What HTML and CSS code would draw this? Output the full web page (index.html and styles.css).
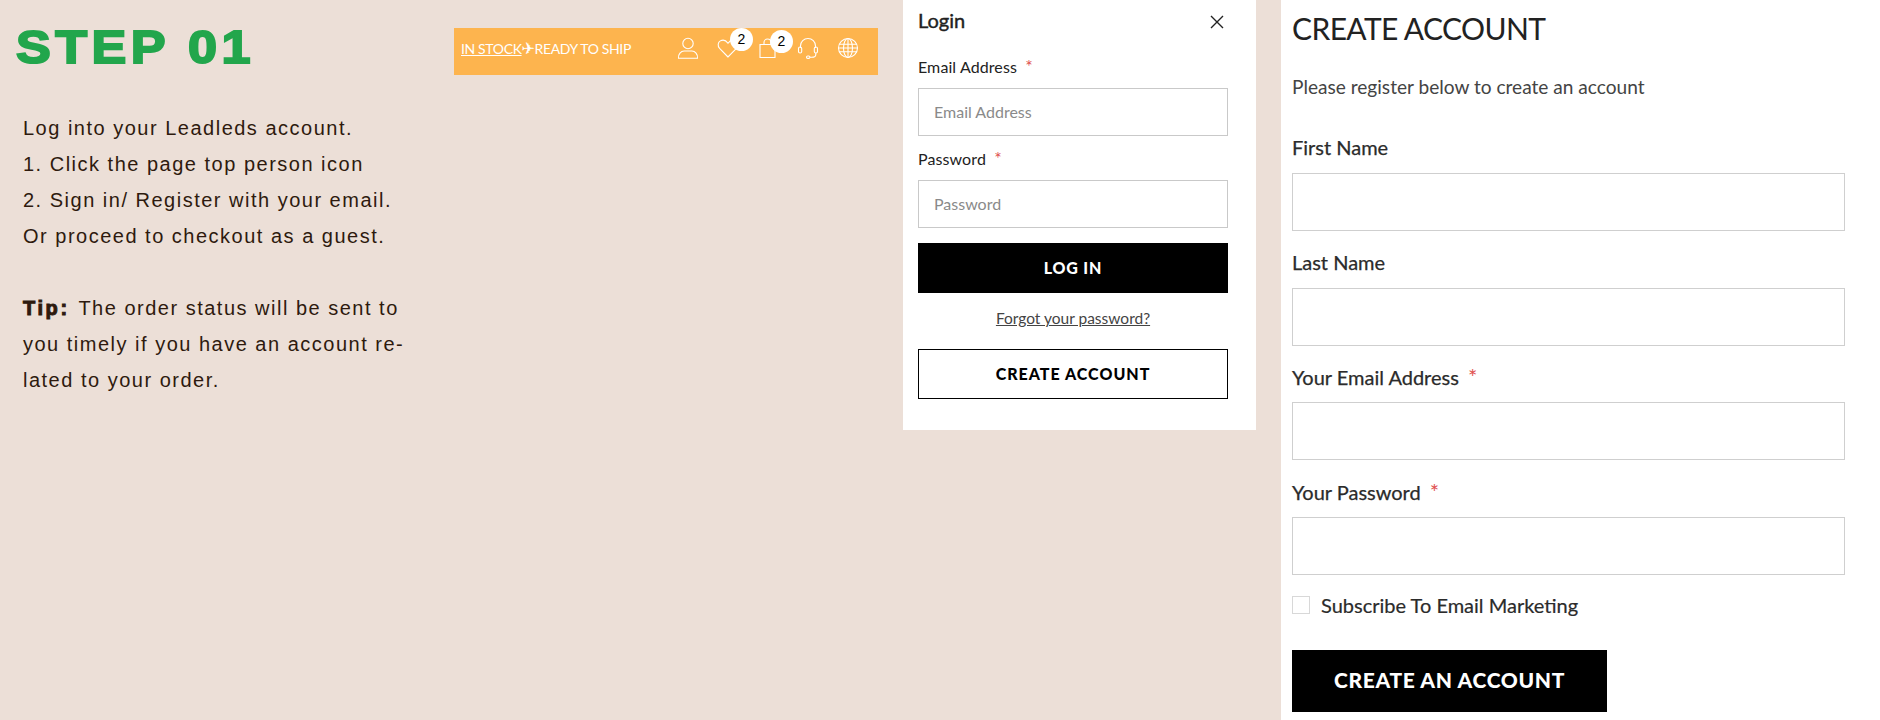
FILE: index.html
```html
<!DOCTYPE html>
<html lang="en">
<head>
<meta charset="UTF-8">
<meta name="viewport" content="width=device-width, initial-scale=1.0">
<title>Step 01</title>
<link rel="stylesheet" href="styles.css">
</head>
<body>
  <div class="page">

    <section class="intro">
      <h1 class="step-title">STEP 01</h1>
      <div class="intro-text">
        <p>Log into your Leadleds account.<br>
        1. Click the page top person icon<br>
        2. Sign in/ Register with your email.<br>
        Or proceed to checkout as a guest.</p>
        <p><b class="tip">Tip:</b> The order status will be sent to<br>
        you timely if you have an account re-<br>
        lated to your order.</p>
      </div>
    </section>

    <section class="topbar-col">
      <div class="topbar">
        <div class="promo"><a href="#">IN STOCK</a><span class="plane">✈</span>READY TO SHIP</div>
        <div class="topbar-icons">
          <!-- person -->
          <svg class="icon" viewBox="0 0 22 22" width="22" height="22">
            <circle cx="11" cy="6.5" r="5.2"/>
            <path d="M1.5 21.3c-.6-4.2 2.6-7.3 5.6-7.3h7.8c3 0 6.2 3.100 5.600 7.300z"/>
          </svg>
          <span class="icon-wrap">
            <svg class="icon" viewBox="0 0 22 22" width="22" height="22">
              <path d="M11 20 2.600 11.400C.4 9 .8 5.400 3.300 3.900c2.600-1.500 5.600-.6 7.700 2.300 2.100-2.900 5.100-3.800 7.700-2.300 2.500 1.500 2.900 5.100.7 7.500z"/>
            </svg>
            <span class="badge badge-heart">2</span>
          </span>
          <span class="icon-wrap">
            <svg class="icon" viewBox="0 0 22 22" width="22" height="22">
              <path d="M3 7.500h15v13H3z"/>
              <path d="M7 7.500V5.500a3.500 3.500 0 0 1 7 0v2"/>
            </svg>
            <span class="badge badge-bag">2</span>
          </span>
          <!-- headset -->
          <svg class="icon" viewBox="0 0 22 22" width="22" height="22">
            <path d="M3.500 11V9a7.500 7.500 0 0 1 15 0v2"/>
            <rect x="1.500" y="10" width="3.200" height="6" rx="1.600"/>
            <rect x="17.300" y="10" width="3.200" height="6" rx="1.600"/>
            <path d="M18.800 16v1.500c0 1.800-2 2.800-4 2.800h-2"/>
            <rect x="9.500" y="19" width="3.400" height="2.400" rx="1.200"/>
          </svg>
          <!-- globe -->
          <svg class="icon" viewBox="0 0 22 22" width="22" height="22">
            <circle cx="11" cy="11" r="9.500"/>
            <ellipse cx="11" cy="11" rx="4.500" ry="9.500"/>
            <path d="M11 1.500v19M2.300 7.300h17.400M1.500 11h19M2.300 14.700h17.400"/>
          </svg>
        </div>
      </div>
    </section>

    <section class="login-col">
      <div class="login-head">
        <h2 class="login-title">Login</h2>
        <svg class="close" viewBox="0 0 14 14" width="14" height="14">
          <path d="M1 1l12 12M13 1 1 13"/>
        </svg>
      </div>
      <label class="login-label">Email Address <span class="req">*</span></label>
      <input class="login-input" type="text" placeholder="Email Address">
      <label class="login-label">Password <span class="req">*</span></label>
      <input class="login-input" type="text" placeholder="Password">
      <button class="btn-login">LOG IN</button>
      <a class="forgot" href="#">Forgot your password?</a>
      <button class="btn-outline">CREATE ACCOUNT</button>
    </section>

    <section class="register-col">
      <h2 class="register-title">CREATE ACCOUNT</h2>
      <p class="register-sub">Please register below to create an account</p>
      <label class="reg-label">First Name</label>
      <input class="reg-input" type="text">
      <label class="reg-label">Last Name</label>
      <input class="reg-input" type="text">
      <label class="reg-label">Your Email Address <span class="req">*</span></label>
      <input class="reg-input" type="text">
      <label class="reg-label">Your Password <span class="req">*</span></label>
      <input class="reg-input" type="text">
      <div class="subscribe">
        <span class="checkbox"></span>
        <span>Subscribe To Email Marketing</span>
      </div>
      <button class="btn-register">CREATE AN ACCOUNT</button>
    </section>

  </div>
</body>
</html>
```

FILE: styles.css
```css
* {
  box-sizing: border-box;
}
body {
  margin: 0;
  height: 720px;
  overflow: hidden;
  background-color: #ecdfd7;
  font-family: "Lato", "Liberation Sans", sans-serif;
}
.page {
  display: flex;
  height: 720px;
}
.req {
  color: #e05050;
  margin-left: 4px;
  font-size: 1.1em;
  -webkit-text-stroke: 0;
}

/* left text */
.intro {
  width: 454px;
  flex: none;
  padding: 22px 0 0 16px;
}
.step-title {
  margin: 0;
  font-family: "Liberation Sans", Arial, sans-serif;
  font-size: 47px;
  line-height: 50px;
  font-weight: bold;
  letter-spacing: 4px;
  color: #22a64c;
  -webkit-text-stroke: 2px #22a64c;
  transform: scaleX(1.11);
  transform-origin: left center;
}
.intro-text {
  padding: 38px 0 0 7px;
  font-family: "Liberation Sans", Arial, sans-serif;
  font-size: 20px;
  line-height: 36px;
  letter-spacing: 1.5px;
  color: #2e1a0e;
}
.intro-text p {
  margin: 0 0 36px;
}
.tip {
  letter-spacing: 2.6px;
  margin-right: 2px;
  -webkit-text-stroke: 1px #2e1a0e;
}

/* orange bar */
.topbar-col {
  width: 449px;
  flex: none;
  padding-top: 28px;
}
.topbar {
  width: 424px;
  height: 47px;
  display: flex;
  align-items: center;
  justify-content: space-between;
  padding: 0 19px 7px 7px;
  background-color: #fdb44e;
  color: #fff;
  font-size: 14px;
}
.promo {
  display: flex;
  align-items: center;
  letter-spacing: -.36px;
}
.promo a {
  color: #fff;
}
.plane {
  font-family: "DejaVu Sans", sans-serif;
  font-size: 16px;
  line-height: 17px;
}
.topbar-icons {
  display: flex;
  align-items: center;
  gap: 18px;
}
.icon {
  display: block;
  fill: none;
  stroke: #fff;
  stroke-width: 1.1;
}
.icon-wrap {
  position: relative;
  display: block;
}
.badge {
  position: absolute;
  width: 23px;
  height: 23px;
  border-radius: 50%;
  background-color: #fff;
  color: #000;
  font-family: "Liberation Sans", Arial, sans-serif;
  font-size: 14px;
  line-height: 23px;
  text-align: center;
}
.badge-heart {
  top: -9px;
  left: 13px;
}
.badge-bag {
  top: -7px;
  left: 13px;
}

/* login panel */
.login-col {
  width: 353px;
  height: 430px;
  flex: none;
  padding: 0 28px 0 15px;
  background-color: #fff;
  color: #222;
}
.login-head {
  height: 43px;
  display: flex;
  align-items: center;
  justify-content: space-between;
  padding-right: 4px;
}
.login-title {
  margin: 0 0 3px;
  font-size: 20px;
  font-weight: 400;
  -webkit-text-stroke: .4px #222;
}
.close {
  fill: none;
  stroke: #222;
  stroke-width: 1.4;
}
.login-label {
  display: block;
  height: 25px;
  margin-top: 11px;
  font-size: 16px;
  line-height: 23px;
  letter-spacing: .1px;
}
.login-head + .login-label {
  margin-top: 12px;
}
.login-input {
  display: block;
  width: 310px;
  height: 48px;
  margin-top: 8px;
  padding: 0 15px 2px;
  border: 1px solid #c9c9c9;
  border-radius: 0;
  background-color: #fff;
  font-family: inherit;
  font-size: 16px;
}
.login-input::placeholder {
  color: #8a8a8a;
}
.btn-login {
  display: block;
  width: 310px;
  height: 50px;
  margin-top: 15px;
  padding: 0 0 2px;
  border: 0;
  background-color: #000;
  color: #fff;
  font-family: inherit;
  font-size: 16px;
  font-weight: 900;
  letter-spacing: .8px;
}
.forgot {
  display: block;
  width: 310px;
  margin-top: 14px;
  font-size: 15.500px;
  line-height: 22px;
  text-align: center;
  color: #444;
}
.btn-outline {
  display: block;
  width: 310px;
  height: 50px;
  margin-top: 20px;
  padding: 0 0 2px;
  border: 1px solid #000;
  background-color: #fff;
  color: #000;
  font-family: inherit;
  font-size: 16px;
  font-weight: 900;
  letter-spacing: 1px;
}

/* register panel */
.register-col {
  flex: none;
  width: 600px;
  height: 720px;
  margin-left: 25px;
  padding: 0 0 0 11px;
  background-color: #fff;
  color: #2b2b2b;
}
.register-title {
  margin: 0;
  padding-top: 9px;
  font-size: 30px;
  line-height: 38px;
  font-weight: 400;
  letter-spacing: -.6px;
  color: #222;
}
.register-sub {
  margin: 26px 0 0;
  font-size: 19.100px;
  line-height: 28px;
  color: #444;
}
.reg-label {
  display: block;
  height: 33px;
  margin-top: 14.670px;
  font-size: 20px;
  line-height: 33px;
  -webkit-text-stroke: .25px #2b2b2b;
}
.register-sub + .reg-label {
  margin-top: 30px;
}
.reg-input {
  display: block;
  width: 553px;
  height: 58px;
  margin-top: 9px;
  border: 1.500px solid #cfcfcf;
  border-radius: 0;
  background-color: #fff;
}
.subscribe {
  display: flex;
  align-items: center;
  gap: 11px;
  margin-top: 15px;
  font-size: 20px;
  line-height: 30px;
  -webkit-text-stroke: .2px #2b2b2b;
}
.checkbox {
  width: 18px;
  height: 18px;
  border: 1px solid #d8d8d8;
}
.btn-register {
  display: block;
  width: 315px;
  height: 62px;
  margin-top: 30px;
  padding: 0 0 2px;
  border: 0;
  background-color: #000;
  color: #fff;
  font-family: inherit;
  font-size: 21px;
  font-weight: 900;
  letter-spacing: .65px;
}
```
